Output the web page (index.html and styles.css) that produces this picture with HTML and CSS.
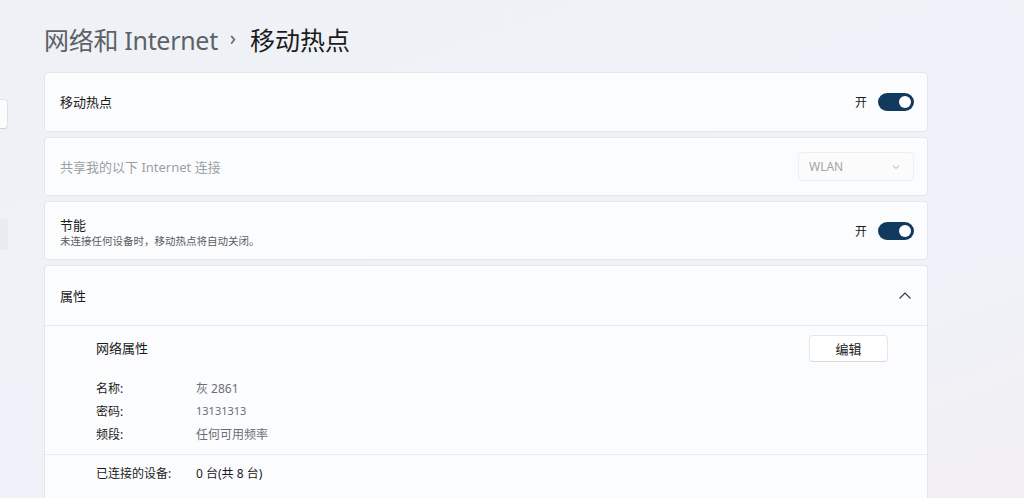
FILE: index.html
```html
<!DOCTYPE html>
<html lang="zh-CN">
<head>
<meta charset="utf-8">
<title>移动热点</title>
<link rel="stylesheet" href="styles.css">
</head>
<body>
<div class="app">
  <div class="nav">
    <div class="nav-stub nav-stub-search"></div>
    <div class="nav-stub nav-stub-item"></div>
  </div>
  <main class="main">
    <h1 class="title"><span class="crumb">网络和 Internet</span><span class="sep">›</span><span class="current">移动热点</span></h1>
    <div class="cards">
      <section class="card card-first">
        <div class="label">移动热点</div>
        <div class="toggle-wrap"><span class="state">开</span><span class="toggle"><span class="knob"></span></span></div>
      </section>
      <section class="card">
        <div class="label disabled">共享我的以下 Internet 连接</div>
        <div class="select"><span>WLAN</span>
          <svg class="chev-down" width="10" height="10" viewBox="0 0 10 10"><polyline points="2,3.5 5,6.5 8,3.5" fill="none" stroke="#a8a8a8" stroke-width="1"/></svg>
        </div>
      </section>
      <section class="card">
        <div class="label-group">
          <div class="label">节能</div>
          <div class="sub">未连接任何设备时，移动热点将自动关闭。</div>
        </div>
        <div class="toggle-wrap"><span class="state">开</span><span class="toggle"><span class="knob"></span></span></div>
      </section>
      <section class="expander">
        <div class="exp-head">
          <div class="label">属性</div>
          <svg class="chev-up" width="14" height="14" viewBox="0 0 14 14"><polyline points="1.5,9.5 7,4 12.5,9.5" fill="none" stroke="#333" stroke-width="1.1"/></svg>
        </div>
        <div class="exp-body">
          <div class="prop-head">
            <div class="label">网络属性</div>
            <button class="btn">编辑</button>
          </div>
          <div class="props">
            <div class="prop"><span class="key">名称:</span><span class="val">灰 2861</span></div>
            <div class="prop"><span class="key">密码:</span><span class="val small">13131313</span></div>
            <div class="prop"><span class="key">频段:</span><span class="val">任何可用频率</span></div>
          </div>
        </div>
        <div class="exp-foot">
          <div class="prop"><span class="key">已连接的设备:</span><span class="val dark">0 台(共 8 台)</span></div>
        </div>
      </section>
    </div>
  </main>
</div>
</body>
</html>
```

FILE: styles.css
```css
html, body {
  margin: 0;
  padding: 0;
  height: 100%;
  overflow: hidden;
}
body {
  background: linear-gradient(160deg, #eef2f7 0%, #eff2f8 70%, #f2eff3 100%);
  font-family: "Noto Sans", "Noto Sans CJK SC", sans-serif;
  color: #1b1b1b;
  font-size: 13px;
}
.app {
  display: flex;
  height: 100%;
}
.nav {
  width: 9px;
  flex: none;
  display: flex;
  flex-direction: column;
}
.nav-stub {
  width: 8px;
  box-sizing: border-box;
  border-radius: 0 4px 4px 0;
}
.nav-stub-search {
  margin-top: 99px;
  height: 30px;
  background: #fbfcfd;
  border: 1px solid #dfe2e6;
  border-left: none;
  border-bottom-color: #cfd2d6;
}
.nav-stub-item {
  margin-top: 90px;
  height: 31px;
  background: #e8ebef;
}
.main {
  flex: none;
  width: 884px;
  padding-left: 35px;
}
.title {
  margin: 0 0 14px 0;
  padding-top: 22px;
  font-weight: 400;
  font-size: 25px;
  line-height: 36px;
  height: 36px;
  display: flex;
  align-items: center;
  white-space: nowrap;
}
.crumb { color: #5e6166; letter-spacing: -0.3px; }
.sep {
  color: #5e6166;
  font-size: 20px;
  margin: 0 14px 0 12px;
  position: relative;
  top: -2px;
}
.current { color: #1b1b1b; }
.cards {
  display: flex;
  flex-direction: column;
  gap: 5px;
}
.card, .expander {
  background: #fbfcfd;
  border: 1px solid #e3e6ea;
  border-radius: 4px;
  box-sizing: border-box;
}
.card {
  height: 59px;
  display: flex;
  align-items: center;
  justify-content: space-between;
  padding: 0 13px 0 15px;
}
.card-first { height: 60px; }
.label {
  font-size: 13px;
  line-height: 18px;
  color: #1b1b1b;
}
.label.disabled { color: #9d9fa3; }
.label-group { display: flex; flex-direction: column; padding-top: 2px; }
.sub {
  font-size: 10.5px;
  line-height: 14px;
  color: #5a5d61;
}
.toggle-wrap {
  display: flex;
  align-items: center;
  gap: 11px;
}
.state {
  font-size: 12px;
  color: #1b1b1b;
}
.toggle {
  width: 36px;
  height: 18px;
  border-radius: 9px;
  background: #123a5f;
  display: flex;
  align-items: center;
  justify-content: flex-end;
  padding-right: 3px;
  box-sizing: border-box;
}
.knob {
  width: 12px;
  height: 12px;
  border-radius: 50%;
  background: #ffffff;
}
.select {
  width: 116px;
  height: 29px;
  box-sizing: border-box;
  border: 1px solid #eceef0;
  border-radius: 4px;
  background: #fbfbfc;
  display: flex;
  align-items: center;
  justify-content: space-between;
  padding: 0 12px 0 10px;
  color: #a3a5a8;
  font-size: 12px;
}
.chev-down { display: block; }
.expander {
  height: 233px;
  border-bottom: none;
  border-radius: 4px 4px 0 0;
}
.exp-head {
  height: 59px;
  display: flex;
  align-items: center;
  justify-content: space-between;
  padding: 0 15px 0 15px;
  border-bottom: 1px solid #e8eaed;
}
.chev-up { display: block; }
.exp-body {
  padding: 9px 39px 9px 51px;
  border-bottom: 1px solid #eaebee;
}
.prop-head {
  display: flex;
  align-items: center;
  justify-content: space-between;
  height: 26px;
}
.btn {
  width: 79px;
  height: 27px;
  box-sizing: border-box;
  background: #ffffff;
  border: 1px solid #e4e6e9;
  border-bottom-color: #d6d8db;
  border-radius: 4px;
  font-family: "Noto Sans", "Noto Sans CJK SC", sans-serif;
  font-size: 13px;
  color: #1b1b1b;
  padding: 0;
}
.props {
  margin-top: 15px;
}
.prop {
  display: flex;
  align-items: center;
  height: 23px;
  font-size: 12px;
}
.key {
  width: 100px;
  flex: none;
  color: #1b1b1b;
}
.val { color: #6b6e72; }
.val.small { font-size: 11px; }
.val.dark { color: #1b1b1b; }
.exp-foot {
  padding: 6px 39px 0 51px;
}
```
